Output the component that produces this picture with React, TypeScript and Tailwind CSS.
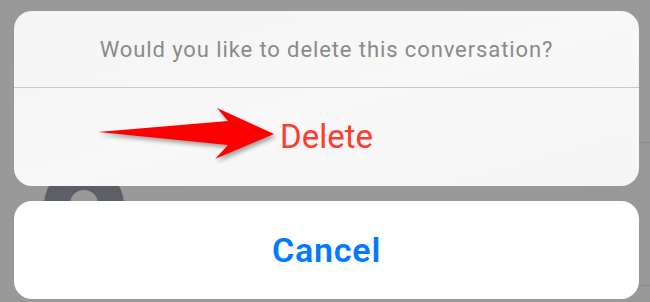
const font = { fontFamily: 'Roboto, "Noto Sans", Arial, sans-serif' };

const Arrow = () => (
  <svg
    className="absolute left-[90px] top-[100px] drop-shadow-[2px_3px_2px_rgba(0,0,0,0.35)]"
    width="200"
    height="70"
    viewBox="90 100 200 70"
  >
    <path
      d="M98 132 L228 121 L217 108 L274 134 L215 159 L228 145 Z"
      fill="#ff0000"
    />
  </svg>
);

const App = () => {
  return (
    <div
      className="relative w-[650px] h-[302px] overflow-hidden bg-[#999999] pt-[11px] pl-[14px] pr-[11px]"
      style={font}
    >
      {/* conversation list showing under the action sheet */}
      <div className="absolute left-[44px] top-[165px] w-[80px] h-[80px] rounded-full bg-[#5c5f66]">
        <div className="mx-auto mt-[25px] w-[28px] h-[28px] rounded-full bg-[#999999]" />
      </div>
      <div className="absolute right-0 top-[142px] w-[14px] h-px bg-[#8a8a8a]" />
      <div className="absolute right-0 top-[285px] w-[14px] h-px bg-[#8a8a8a]" />

      <div className="relative flex flex-col gap-[15px]">
        <div className="flex flex-col rounded-[18px] bg-gradient-to-br from-[#f4f4f4] via-[#f8f8f8] to-[#f5f5f5] overflow-hidden">
          <div className="h-[76px] flex items-center justify-center text-[22px] text-[#8a8a8a] tracking-[0.9px]">
            Would you like to delete this conversation?
          </div>
          <div className="h-px bg-[#c9c9c9]" />
          <div className="h-[98px] flex items-center justify-center text-[33px] text-[#ff3b30] pb-[1px]">
            Delete
          </div>
        </div>
        <div className="h-[98px] rounded-[18px] bg-white flex items-center justify-center text-[34px] font-semibold text-[#007aff] tracking-[0.8px]">
          Cancel
        </div>
      </div>

      <Arrow />
    </div>
  );
};

export default App;
